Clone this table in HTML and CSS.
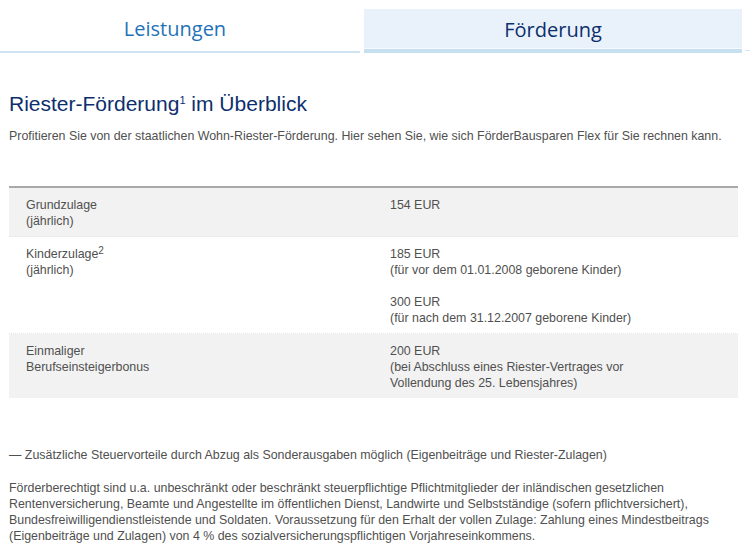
FILE: index.html
```html
<!DOCTYPE html>
<html lang="de">
<head>
<meta charset="utf-8">
<link rel="stylesheet" href="styles.css">
</head>
<body>
<div class="tabs">
  <div class="tab">Leistungen</div>
  <div class="tab active">Förderung</div>
  <div class="tab-rest"></div>
</div>
<main class="content">
  <h1 class="title">Riester-Förderung<sup>1</sup> im Überblick</h1>
  <p class="intro">Profitieren Sie von der staatlichen Wohn-Riester-Förderung. Hier sehen Sie, wie sich FörderBausparen Flex für Sie rechnen kann.</p>
  <div class="table">
    <div class="row shaded">
      <div class="cell label">Grundzulage<br>(jährlich)</div>
      <div class="cell value">154 EUR</div>
    </div>
    <div class="row">
      <div class="cell label">Kinderzulage<sup>2</sup><br>(jährlich)</div>
      <div class="cell value">
        <p>185 EUR<br>(für vor dem 01.01.2008 geborene Kinder)</p>
        <p>300 EUR<br>(für nach dem 31.12.2007 geborene Kinder)</p>
      </div>
    </div>
    <div class="row shaded">
      <div class="cell label">Einmaliger<br>Berufseinsteigerbonus</div>
      <div class="cell value">200 EUR<br>(bei Abschluss eines Riester-Vertrages vor<br>Vollendung des 25. Lebensjahres)</div>
    </div>
  </div>
  <p class="note">— Zusätzliche Steuervorteile durch Abzug als Sonderausgaben möglich (Eigenbeiträge und Riester-Zulagen)</p>
  <p class="fine">Förderberechtigt sind u.a. unbeschränkt oder beschränkt steuerpflichtige Pflichtmitglieder der inländischen gesetzlichen Rentenversicherung, Beamte und Angestellte im öffentlichen Dienst, Landwirte und Selbstständige (sofern pflichtversichert), Bundesfreiwilligendienstleistende und Soldaten. Voraussetzung für den Erhalt der vollen Zulage: Zahlung eines Mindestbeitrags (Eigenbeiträge und Zulagen) von 4 % des sozialversicherungspflichtigen Vorjahreseinkommens.</p>
</main>
</body>
</html>
```
FILE: styles.css
```css
html, body {
  margin: 0;
  padding: 0;
  background: #fff;
}
body {
  font-family: "Liberation Sans", Arial, sans-serif;
  color: #505050;
  font-size: 12.4px;
  line-height: 16px;
}
.tabs {
  display: flex;
  align-items: flex-end;
  height: 53px;
}
.tab {
  font-family: "Open Sans", "Liberation Sans", sans-serif;
  font-size: 20px;
  line-height: 26px;
  text-align: center;
  box-sizing: border-box;
}
.tab:first-child {
  width: 360px;
  color: #1f72b8;
  border-bottom: 2px solid #cfe4f2;
  padding-bottom: 9px;
  margin-bottom: 0;
  padding-right: 10px;
}
.tab.active {
  width: 378px;
  margin-left: 4px;
  height: 44px;
  background: #e9f2fa;
  color: #0d2f6e;
  padding-top: 8px;
  border-bottom: 4px solid #c6e0ef;
  box-shadow: inset 0 -1px 0 #f4f9fd;
}
.tab-rest {
  flex: 1;
  margin-left: 3px;
  height: 1px;
  margin-bottom: 2px;
  background: #d6e7f3;
}
.content {
  padding: 0 9px;
}
.title {
  margin: 38px 0 0;
  font-family: "Liberation Sans", Arial, sans-serif;
  font-weight: normal;
  font-size: 21px;
  line-height: 26px;
  color: #0d2f6e;
}
.title sup {
  font-size: 11px;
  vertical-align: 7px;
  line-height: 0;
}
.intro {
  margin: 11px 0 0;
}
.table {
  margin-top: 42px;
  width: 729px;
  border-top: 2px solid #a9a9a9;
}
.row {
  display: flex;
  padding: 9px 0 7px;
  border-bottom: 1px dotted #e4e4e4;
}
.row:last-child {
  border-bottom: none;
}
.row.shaded {
  background: #f2f2f2;
}
.cell.label {
  width: 364px;
  padding-left: 17px;
}
.cell.value {
  flex: 1;
}
.cell sup {
  font-size: 10px;
  vertical-align: 4px;
  line-height: 0;
}
.cell p {
  margin: 0 0 16px;
}
.cell p:last-child {
  margin-bottom: 0;
}
.note {
  margin: 49px 0 0;
}
.fine {
  margin: 17px 0 0;
}
```
